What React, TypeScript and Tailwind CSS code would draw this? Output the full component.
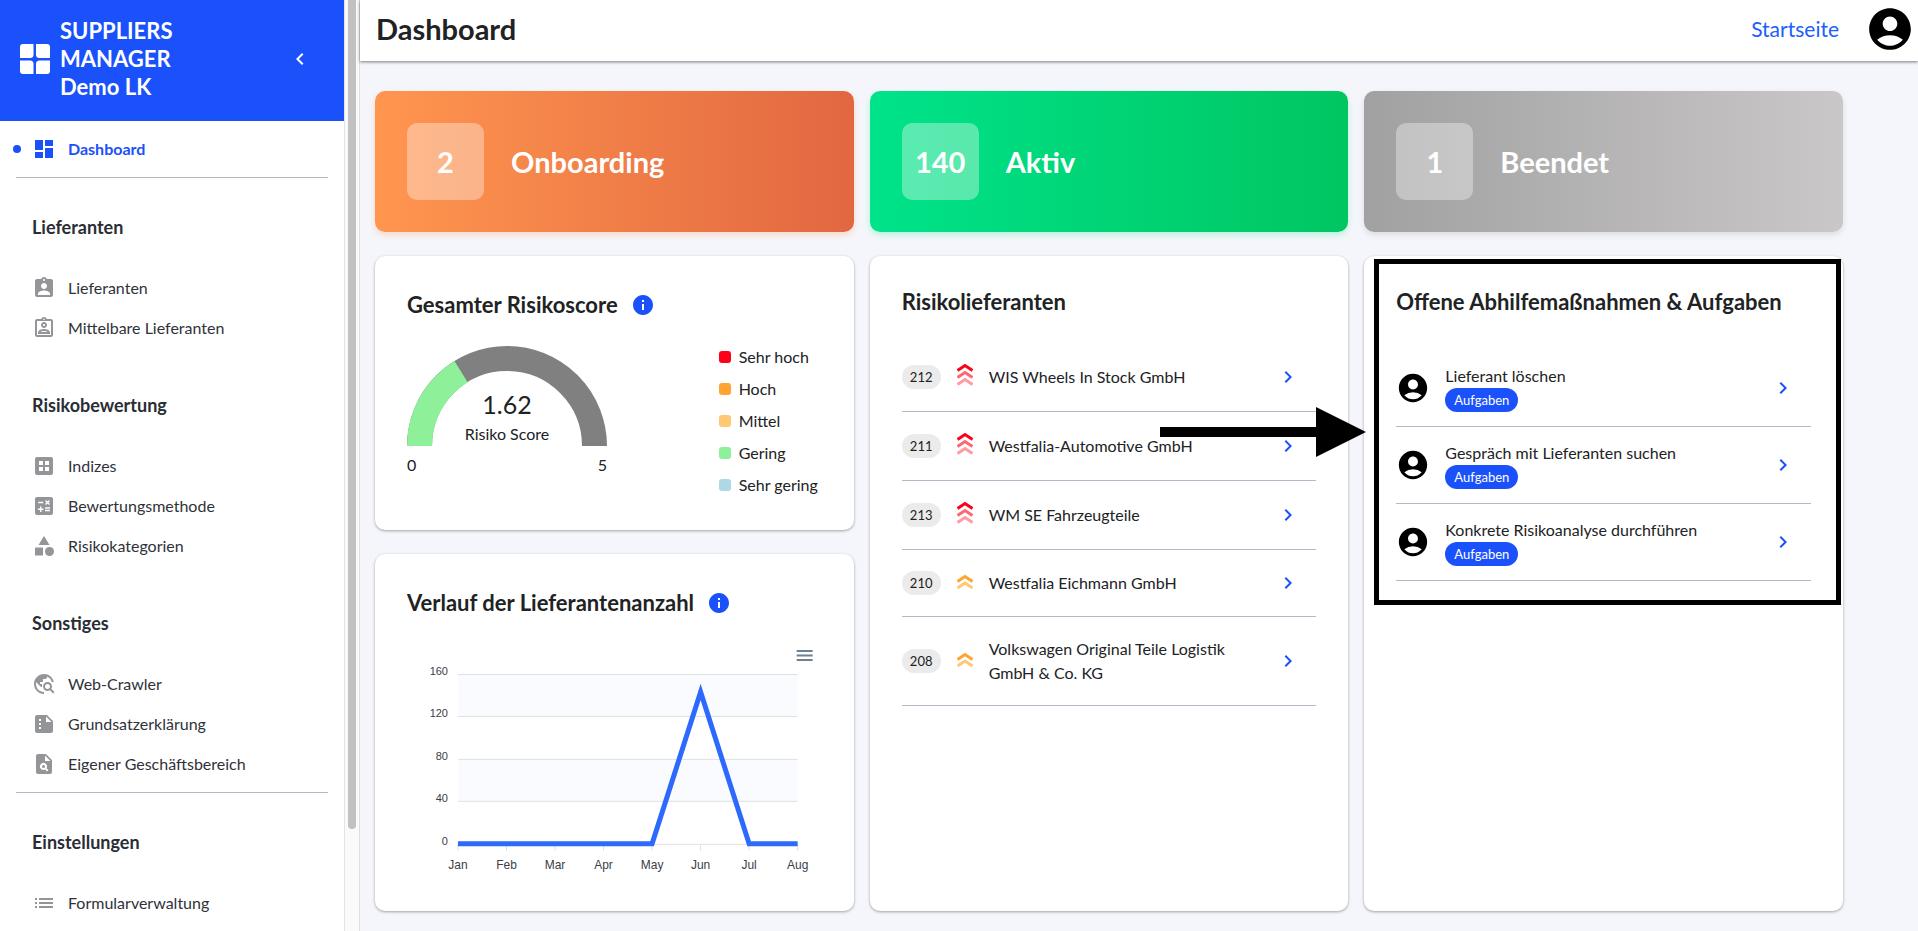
import React from 'react';
import type { IconType } from 'react-icons';
import {
  MdAccountCircle,
  MdAssignmentInd,
  MdCalculate,
  MdCategory,
  MdChevronLeft,
  MdChevronRight,
  MdDashboard,
  MdInfo,
  MdList,
  MdOutlineAssignmentInd,
  MdPlagiarism,
  MdTravelExplore,
} from 'react-icons/md';

type NavItem = { label: string; icon: IconType | (() => React.ReactElement) };

const IndexIcon = () => (
  <svg width="24" height="24" viewBox="0 0 24 24">
    <path
      fill="currentColor"
      fillRule="evenodd"
      d="M5 3h14a2 2 0 0 1 2 2v14a2 2 0 0 1-2 2H5a2 2 0 0 1-2-2V5a2 2 0 0 1 2-2zm2 4v4h4V7H7zm6 0v4h4V7h-4zm-6 6v4h4v-4H7zm6 0v4h4v-4h-4z"
    />
  </svg>
);

const SummaryIcon = () => (
  <svg width="24" height="24" viewBox="0 0 24 24">
    <path
      fill="currentColor"
      fillRule="evenodd"
      d="M15 3H5a2 2 0 0 0-2 2v14a2 2 0 0 0 2 2h14a2 2 0 0 0 2-2V9l-6-6zM7 7h2v2H7V7zm0 4h2v2H7v-2zm0 4h2v2H7v-2zm7-5V4.500l5.500 5.500H14z"
    />
  </svg>
);

const Logo = () => (
  <svg width="30" height="30" viewBox="0 0 30 30" fill="white">
    <path d="M3 0h10.500v10.500a3.500 3.500 0 0 1-3.500 3.500H0V3a3 3 0 0 1 3-3z" />
    <path d="M16 0h11a3 3 0 0 1 3 3v11H19.500a3.500 3.500 0 0 1-3.500-3.500z" />
    <path d="M0 16.500h10a3.500 3.500 0 0 1 3.500 3.500v10H3a3 3 0 0 1-3-3z" />
    <path d="M19.500 16.500H30V27a3 3 0 0 1-3 3H16V20a3.500 3.500 0 0 1 3.500-3.500z" />
  </svg>
);

const sections: { title: string; items: NavItem[] }[] = [
  {
    title: 'Lieferanten',
    items: [
      { label: 'Lieferanten', icon: MdAssignmentInd },
      { label: 'Mittelbare Lieferanten', icon: MdOutlineAssignmentInd },
    ],
  },
  {
    title: 'Risikobewertung',
    items: [
      { label: 'Indizes', icon: IndexIcon },
      { label: 'Bewertungsmethode', icon: MdCalculate },
      { label: 'Risikokategorien', icon: MdCategory },
    ],
  },
  {
    title: 'Sonstiges',
    items: [
      { label: 'Web-Crawler', icon: MdTravelExplore },
      { label: 'Grundsatzerklärung', icon: SummaryIcon },
      { label: 'Eigener Geschäftsbereich', icon: MdPlagiarism },
    ],
  },
];

const stats = [
  {
    value: 2,
    label: 'Onboarding',
    style:
      'bg-linear-to-r from-[#ff964f] to-[#e26741] shadow-[0_3px_6px_rgba(255,150,79,0.3)]',
  },
  {
    value: 140,
    label: 'Aktiv',
    style:
      'bg-linear-to-r from-[#00e38a] to-[#00c661] shadow-[0_3px_6px_rgba(0,229,139,0.25)]',
  },
  {
    value: 1,
    label: 'Beendet',
    style:
      'bg-linear-to-r from-[#a1a1a1] to-[#cac7c8] shadow-[0_3px_6px_rgba(0,0,0,0.1)]',
  },
];

const legend = [
  { label: 'Sehr hoch', color: 'bg-[#ff0019]' },
  { label: 'Hoch', color: 'bg-[#ffa430]' },
  { label: 'Mittel', color: 'bg-[#ffc973]' },
  { label: 'Gering', color: 'bg-[#8ef19a]' },
  { label: 'Sehr gering', color: 'bg-[#add8e6]' },
];

const suppliers = [
  { id: 212, name: 'WIS Wheels In Stock GmbH', level: 'high' },
  { id: 211, name: 'Westfalia-Automotive GmbH', level: 'high' },
  { id: 213, name: 'WM SE Fahrzeugteile', level: 'high' },
  { id: 210, name: 'Westfalia Eichmann GmbH', level: 'medium' },
  { id: 208, name: 'Volkswagen Original Teile Logistik GmbH & Co. KG', level: 'medium' },
];

const tasks = [
  'Lieferant löschen',
  'Gespräch mit Lieferanten suchen',
  'Konkrete Risikoanalyse durchführen',
];

const history = [
  { month: 'Jan', count: 0 },
  { month: 'Feb', count: 0 },
  { month: 'Mar', count: 0 },
  { month: 'Apr', count: 0 },
  { month: 'May', count: 0 },
  { month: 'Jun', count: 143 },
  { month: 'Jul', count: 0 },
  { month: 'Aug', count: 0 },
];

const SidebarLink = ({ label, icon: Icon }: NavItem) => (
  <a href="#" className="flex h-10 items-center gap-3 pl-8 text-[16px] text-[#2f323a]">
    <span className="text-[#949599]">
      <Icon size={24} />
    </span>
    {label}
  </a>
);

const SidebarTitle = ({ children }: { children: React.ReactNode }) => (
  <h2 className="mb-[29px] pt-[37px] pl-8 text-[18px] leading-6 font-bold text-[#2a2d35]">
    {children}
  </h2>
);

const Sidebar = () => (
  <aside className="flex h-screen w-[360px] shrink-0 overflow-hidden border-r border-[#dedede] bg-[#fafafa]">
    <div className="flex-1 bg-white">
      <div className="flex h-[121px] items-center bg-[#1b51fb] pr-6 pb-1 pl-5 text-white">
        <Logo />
        <div className="ml-[10px] flex-1 text-[22px] leading-7 font-bold">
          SUPPLIERS
          <br />
          MANAGER
          <br />
          Demo LK
        </div>
        <button aria-label="Menü einklappen" className="p-2">
          <MdChevronLeft size={24} />
        </button>
      </div>
      <nav>
        <div className="mx-4 border-b border-[#b4b5bd] py-2">
          <a
            href="#"
            className="-mx-4 flex h-10 items-center pl-[13px] text-[16px] font-bold text-[#1b51fb]"
          >
            <span className="mr-[11px] size-2 rounded-full bg-[#1b51fb]" />
            <MdDashboard size={24} className="mr-3" />
            Dashboard
          </a>
        </div>
        {sections.map((section) => (
          <div key={section.title} className="pb-2">
            <SidebarTitle>{section.title}</SidebarTitle>
            {section.items.map((item) => (
              <SidebarLink key={item.label} {...item} />
            ))}
          </div>
        ))}
        <hr className="mx-4 border-[#b4b8c8]" />
        <SidebarTitle>Einstellungen</SidebarTitle>
        <SidebarLink label="Formularverwaltung" icon={MdList} />
      </nav>
    </div>
    <div className="w-[15px] border-l border-[#e4e4e4] px-[3px]">
      <div className="h-[89%] w-2 rounded-b-full bg-[#c1c1c1]" />
    </div>
  </aside>
);

const Card = ({ className = '', children }: { className?: string; children: React.ReactNode }) => (
  <section
    className={`rounded-[10px] bg-white px-8 shadow-[0_1px_3px_rgba(0,0,0,0.35)] ${className}`}
  >
    {children}
  </section>
);

const CardTitle = ({ children, info }: { children: React.ReactNode; info?: boolean }) => (
  <h2 className="flex items-center gap-[13px] text-[22px] leading-7 font-bold text-[#212224]">
    {children}
    {info && <MdInfo size={24} className="text-[#1b51fb]" />}
  </h2>
);

// half ring, filled clockwise from the left up to value / max
const Gauge = ({ value, max }: { value: number; max: number }) => {
  const angle = Math.PI * (1 - value / max);
  const x = 100 + 87.5 * Math.cos(angle);
  const y = 100 - 87.5 * Math.sin(angle);
  return (
    <div className="w-[200px]">
      <div className="relative">
        <svg width="200" height="100" viewBox="0 0 200 100" fill="none" strokeWidth="25">
          <path d="M12.500 100A87.500 87.500 0 0 1 187.500 100" stroke="#808080" />
          <path d={`M12.5 100A87.5 87.5 0 0 1 ${x} ${y}`} stroke="#8ef19a" />
        </svg>
        <div className="absolute inset-x-0 bottom-0 text-center text-[#212224]">
          <div className="text-[25px] leading-9">{value}</div>
          <div className="text-[16px] leading-6">Risiko Score</div>
        </div>
      </div>
      <div className="mt-[7px] flex justify-between text-[16px] leading-6">
        <span>0</span>
        <span>{max}</span>
      </div>
    </div>
  );
};

const HistoryChart = () => {
  const px = (i: number) => 51 + (i * 340) / 7;
  const py = (v: number) => 205 - (v * 170) / 160;
  const points = history.map((h, i) => `${px(i)},${py(h.count)}`).join(' ');
  return (
    <svg
      viewBox="0 0 415 250"
      className="block w-full font-['Liberation_Sans',sans-serif]"
      fill="#3c4046"
    >
      <rect x="51" y="35" width="340" height="43" fill="#fafbff" />
      <rect x="51" y="120" width="340" height="43" fill="#fafbff" />
      {[0, 40, 80, 120, 160].map((v) => (
        <g key={v}>
          <path d={`M51 ${Math.floor(py(v)) + 0.5}h340`} stroke="#dfe0e2" />
          <text x="41" y={py(v) + 1} textAnchor="end" fontSize="11">
            {v}
          </text>
        </g>
      ))}
      {history.map((h, i) => (
        <g key={h.month}>
          <path d={`M${px(i)} 206v6`} stroke="#dfe0e2" />
          <text x={px(i)} y="230" textAnchor="middle" fontSize="12">
            {h.month}
          </text>
        </g>
      ))}
      <polyline points={points} fill="none" stroke="#2c69fc" strokeWidth="5" strokeMiterlimit="10" />
      <path d="M390 12h16M390 16.500h16M390 21h16" stroke="#6e8192" strokeWidth="2" />
    </svg>
  );
};

const RiskIcon = ({ level }: { level: string }) =>
  level === 'high' ? (
    <svg width="16" height="28" viewBox="0 0 16 28" fill="none" strokeWidth="3">
      <path d="M0.500 7.500 8 2.500l7.500 5" stroke="#ff0019" />
      <path d="M0.500 14.500 8 9.500l7.500 5" stroke="#ff6675" />
      <path d="M0.500 21.500 8 16.500l7.500 5" stroke="#ff99a3" />
    </svg>
  ) : (
    <svg width="16" height="26" viewBox="0 0 16 26" fill="none" strokeWidth="3">
      <path d="M0.500 11.500 8 6.500l7.500 5" stroke="#ffa430" />
      <path d="M0.500 18 8 13l7.500 5" stroke="#ffc973" />
    </svg>
  );

// black frame and arrow that point at the open tasks
const Highlight = () => (
  <>
    <div className="pointer-events-none absolute top-[3px] right-[2px] left-[10px] h-[346px] border-[5px] border-black" />
    <svg
      width="206"
      height="50"
      viewBox="0 0 206 50"
      className="pointer-events-none absolute top-[151px] -left-[204px]"
    >
      <path d="M0 20h156V0l50 25-50 25V30H0z" />
    </svg>
  </>
);

const App = () => {
  return (
    <div className="flex h-screen overflow-hidden bg-[#f5f6fb] font-['Lato','Open_Sans',sans-serif] text-[#212224]">
      <Sidebar />
      <main className="min-w-0 flex-1">
        <header className="flex h-[61px] items-center bg-white pb-[3px] pl-4 pr-[3px] shadow-[0_1px_3px_rgba(0,0,0,0.5)]">
          <h1 className="flex-1 text-[29px] leading-9 font-bold">Dashboard</h1>
          <a href="#" className="mr-[26px] text-[21px] leading-7 text-[#1b60fb]">
            Startseite
          </a>
          <button aria-label="Konto" className="text-black">
            <MdAccountCircle size={50} />
          </button>
        </header>

        <div className="grid grid-cols-3 gap-x-4 gap-y-6 pt-[30px] pr-[75px] pl-[15px]">
          {stats.map((stat) => (
            <div
              key={stat.label}
              className={`flex items-center gap-[27px] rounded-[10px] p-8 text-[29px] leading-9 font-bold text-white ${stat.style}`}
            >
              <div className="flex size-[77px] items-center justify-center rounded-[10px] bg-white/35">
                {stat.value}
              </div>
              {stat.label}
            </div>
          ))}

          <div className="flex flex-col gap-6">
            <Card className="h-[274px] pt-[35px]">
              <CardTitle info>Gesamter Risikoscore</CardTitle>
              <div className="mt-[21px] flex justify-between">
                <div className="pt-[6px]">
                  <Gauge value={1.62} max={5} />
                </div>
                <ul className="flex w-[103px] flex-col gap-2 pt-[5px]">
                  {legend.map((entry) => (
                    <li
                      key={entry.label}
                      className="flex items-center gap-2 text-[16px] leading-6 whitespace-nowrap"
                    >
                      <span className={`size-3 rounded-[3px] ${entry.color}`} />
                      {entry.label}
                    </li>
                  ))}
                </ul>
              </div>
            </Card>
            <Card className="h-[357px] pt-[35px]">
              <CardTitle info>Verlauf der Lieferantenanzahl</CardTitle>
              <div className="mt-[22px]">
                <HistoryChart />
              </div>
            </Card>
          </div>

          <Card className="pt-8">
            <CardTitle>Risikolieferanten</CardTitle>
            <ul className="mt-[27px]">
              {suppliers.map((supplier) => (
                <li key={supplier.id} className="flex items-center border-b border-[#b4b8c8] py-5">
                  <span className="w-[39px] rounded-full bg-[#ebebeb] text-center text-[13px] leading-6">
                    {supplier.id}
                  </span>
                  <span className="mx-4">
                    <RiskIcon level={supplier.level} />
                  </span>
                  <span className="w-[270px] text-[16px] leading-6">{supplier.name}</span>
                  <button
                    aria-label={`${supplier.name} öffnen`}
                    className="mr-4 ml-auto text-[#1b51fb]"
                  >
                    <MdChevronRight size={24} />
                  </button>
                </li>
              ))}
            </ul>
          </Card>

          <Card className="relative pt-8">
            <CardTitle>Offene Abhilfemaßnahmen &amp; Aufgaben</CardTitle>
            <ul className="mt-[34px]">
              {tasks.map((task) => (
                <li key={task} className="flex items-center border-b border-[#b4b8c8] py-[14px]">
                  <MdAccountCircle size={34} className="mr-[15px] text-black" />
                  <div className="flex flex-col items-start">
                    <span className="text-[16px] leading-6">{task}</span>
                    <span className="rounded-full bg-[#1b51fb] px-[9px] text-[13px] leading-6 text-white">
                      Aufgaben
                    </span>
                  </div>
                  <button aria-label={`${task} öffnen`} className="mr-4 ml-auto text-[#1b51fb]">
                    <MdChevronRight size={24} />
                  </button>
                </li>
              ))}
            </ul>
            <Highlight />
          </Card>
        </div>
      </main>
    </div>
  );
};

export default App;
